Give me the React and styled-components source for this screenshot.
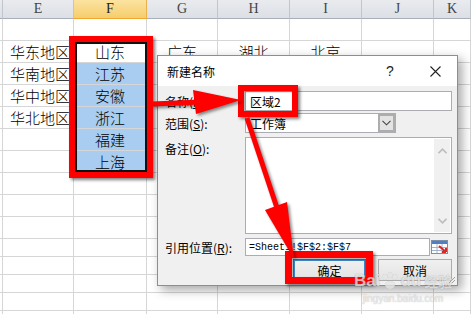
import styled, { createGlobalStyle } from "styled-components";

const GlobalStyle = createGlobalStyle`
  html, body { margin: 0; padding: 0; background: #fff; }
  body {
    font-family: "Noto Sans CJK SC", "Liberation Sans", sans-serif;
    overflow: hidden;
  }
`;

const COLS = ["", "E", "F", "G", "H", "I", "J", "K"];
const TEMPLATE = "3px 71px 73px 71px 72px 72px 72px 1fr";

const DATA = {
  1: { E: "华东地区", F: "山东", G: "广东", H: "湖北", I: "北京" },
  2: { E: "华南地区", F: "江苏" },
  3: { E: "华中地区", F: "安徽" },
  4: { E: "华北地区", F: "浙江" },
  5: { F: "福建" },
  6: { F: "上海" },
};

const ROWS = Array.from({ length: 15 }, (_, i) => ({
  h: i < 10 ? 22 : 18,
  ...(DATA[i] || {}),
}));

export default function App() {
  return (
    <>
      <GlobalStyle />
      <Frame>
        <Sheet>
          <HeadRow>
            {COLS.map((c, i) => (
              <HeadCell key={i} $sel={c === "F"}>{c}</HeadCell>
            ))}
          </HeadRow>
          {ROWS.map((r, i) => (
            <Row key={i} $h={r.h}>
              <Cell />
              <Cell $left>{r.E}</Cell>
              <Cell $fill={i >= 2 && i <= 6 ? "#a9cdf0" : "#fff"}>{r.F}</Cell>
              <Cell>{r.G}</Cell>
              <Cell>{r.H}</Cell>
              <Cell>{r.I}</Cell>
              <Cell />
              <Cell />
            </Row>
          ))}
        </Sheet>

        <Dialog>
          <TitleBar>
            <span>新建名称</span>
            <Controls>
              <Ctrl>?</Ctrl>
              <Ctrl>
                <svg width="11" height="11" viewBox="0 0 11 11">
                  <path d="M0.5 0.5 L10.5 10.5 M10.5 0.5 L0.5 10.5" stroke="#222" strokeWidth="1.1" />
                </svg>
              </Ctrl>
            </Controls>
          </TitleBar>

          <Body>
            <Field>
              <Label>名称(<u>N</u>):</Label>
              <Input>区域2</Input>
            </Field>

            <Field $gap={2}>
              <Label>范围(<u>S</u>):</Label>
              <Select>
                <span>工作簿</span>
                <DropBtn>
                  <svg width="9" height="6" viewBox="0 0 9 6">
                    <path d="M0.5 0.8 L4.5 4.8 L8.5 0.8" fill="none" stroke="#444" strokeWidth="1.1" />
                  </svg>
                </DropBtn>
              </Select>
            </Field>

            <Field $gap={4} $top>
              <Label $pt={3}>备注(<u>O</u>):</Label>
              <TextArea>
                <ScrollBar>
                  <svg width="9" height="6" viewBox="0 0 9 6">
                    <path d="M0.5 5.2 L4.5 1.2 L8.5 5.2" fill="none" stroke="#bdbdbd" strokeWidth="1.6" />
                  </svg>
                  <svg width="9" height="6" viewBox="0 0 9 6">
                    <path d="M0.5 0.8 L4.5 4.8 L8.5 0.8" fill="none" stroke="#bdbdbd" strokeWidth="1.6" />
                  </svg>
                </ScrollBar>
              </TextArea>
            </Field>

            <Field $gap={4}>
              <Label>引用位置(<u>R</u>):</Label>
              <RefLine>
                <RefInput>=Sheet1!$F$2:$F$7</RefInput>
                <svg width="18" height="16" viewBox="0 0 18 16">
                  <rect x="0.5" y="1.5" width="16" height="13" fill="#fff" stroke="#7d8ea8" />
                  <rect x="1" y="2" width="15" height="3" fill="#4f7fc4" />
                  <path d="M1 8.5 H16 M1 11.5 H16 M6 5 V14 M11 5 V14" stroke="#9fb3cf" strokeWidth="1" />
                  <path d="M8 7 L15 13 M15 13 L15 9 M15 13 L11 13" stroke="#d8262a" strokeWidth="2" fill="none" />
                </svg>
              </RefLine>
            </Field>

            <Buttons>
              <Button $focus>确定</Button>
              <Button>取消</Button>
            </Buttons>
          </Body>

          <Grip>
            <svg width="8" height="8" viewBox="0 0 8 8">
              <path d="M7 1 L1 7 M7 4 L4 7" stroke="#a0a0a0" strokeWidth="1" />
            </svg>
          </Grip>
        </Dialog>

        <RedBox $l={69} $t={36} $w={84} $h={142} $b={6}>
          <Inner />
        </RedBox>
        <RedBox $l={238} $t={85} $w={60} $h={32} $b={6} />
        <RedBox $l={285} $t={251} $w={88} $h={33} $b={7} />

        <Arrows width="471" height="314" viewBox="0 0 471 314">
          <path d="M152 104 L200 102" stroke="#ff0000" strokeWidth="5" />
          <polygon points="241,100 193,90 196,114" fill="#ff0000" />
          <path d="M247 118 L277 208" stroke="#ff0000" strokeWidth="5" />
          <polygon points="294,259 287,202 265,210" fill="#ff0000" />
        </Arrows>

        <Watermark>
          <Brand>
            Bai
            <svg width="20" height="18" viewBox="0 0 20 18">
              <ellipse cx="5" cy="5" rx="2.3" ry="3" fill="currentColor" />
              <ellipse cx="10" cy="3" rx="2.3" ry="3" fill="currentColor" />
              <ellipse cx="15" cy="5" rx="2.3" ry="3" fill="currentColor" />
              <ellipse cx="10" cy="13" rx="5" ry="4" fill="currentColor" />
            </svg>
            du<Small>经验</Small>
          </Brand>
          <Url>jingyan.baidu.com</Url>
        </Watermark>
      </Frame>
    </>
  );
}

const Frame = styled.div`
  position: relative;
  width: 471px;
  height: 314px;
  overflow: hidden;
  background: #fff;
`;

const Sheet = styled.div`
  display: flex;
  flex-direction: column;
`;

const HeadRow = styled.div`
  display: grid;
  grid-template-columns: ${TEMPLATE};
  height: 19px;
`;

const HeadCell = styled.div`
  box-sizing: border-box;
  display: flex;
  align-items: center;
  justify-content: center;
  font-family: "Liberation Serif", serif;
  font-size: 14px;
  color: ${(p) => (p.$sel ? "#222" : "#444")};
  background: ${(p) =>
    p.$sel
      ? "linear-gradient(#fbe3a0, #f6cd6c)"
      : "linear-gradient(#e9ebef, #dcdfe4)"};
  border-right: 1px solid ${(p) => (p.$sel ? "#e8b04f" : "#c1c6cd")};
  border-bottom: 1px solid ${(p) => (p.$sel ? "#f0a530" : "#a9afb8")};
`;

const Row = styled.div`
  display: grid;
  grid-template-columns: ${TEMPLATE};
  height: ${(p) => p.$h}px;
`;

const Cell = styled.div`
  box-sizing: border-box;
  display: flex;
  align-items: center;
  justify-content: ${(p) => (p.$left ? "flex-start" : "center")};
  padding-left: ${(p) => (p.$left ? "7px" : "0")};
  background: ${(p) => p.$fill || "#fff"};
  border-right: 1px solid #d6d6d6;
  border-bottom: 1px solid #d6d6d6;
  font-size: 15px;
  font-weight: 300;
  color: #000;
  white-space: nowrap;
  overflow: visible;
`;

const Dialog = styled.div`
  position: absolute;
  left: 157px;
  top: 55px;
  width: 301px;
  height: 231px;
  box-sizing: border-box;
  border: 1px solid #33b3c2;
  background: #f0f0f0;
  box-shadow: 4px 4px 10px rgba(0, 0, 0, 0.35);
  display: flex;
  flex-direction: column;
`;

const TitleBar = styled.div`
  height: 30px;
  background: #fff;
  display: flex;
  align-items: center;
  justify-content: space-between;
  padding-left: 9px;
  padding-right: 7px;
  font-size: 12px;
  color: #000;
`;

const Controls = styled.div`
  display: flex;
  gap: 15px;
`;

const Ctrl = styled.div`
  width: 30px;
  height: 20px;
  display: flex;
  align-items: center;
  justify-content: center;
  font-family: "Liberation Sans", sans-serif;
  font-size: 14px;
  color: #222;
`;

const Body = styled.div`
  flex: 1;
  display: flex;
  flex-direction: column;
  padding: 5px 5px 0 7px;
`;

const Field = styled.div`
  display: grid;
  grid-template-columns: 80px 1fr;
  align-items: ${(p) => (p.$top ? "start" : "center")};
  margin-top: ${(p) => p.$gap || 0}px;
`;

const Label = styled.div`
  font-size: 12px;
  color: #000;
  padding-top: ${(p) => p.$pt || 0}px;
  white-space: nowrap;

  u {
    text-underline-offset: 1px;
  }
`;

const Input = styled.div`
  box-sizing: border-box;
  height: 20px;
  background: #fff;
  border: 1px solid #abadb3;
  display: flex;
  align-items: center;
  padding-left: 4px;
  font-size: 12px;
`;

const Select = styled(Input)`
  width: 151px;
  justify-content: space-between;
  padding-right: 0;
`;

const DropBtn = styled.div`
  box-sizing: border-box;
  width: 17px;
  height: 18px;
  background: #e3e3e3;
  border: 2px solid #adadad;
  display: flex;
  align-items: center;
  justify-content: center;
`;

const TextArea = styled.div`
  box-sizing: border-box;
  height: 97px;
  background: #fff;
  border: 1px solid #abadb3;
  display: flex;
  justify-content: flex-end;
  padding: 1px;
`;

const ScrollBar = styled.div`
  width: 16px;
  background: #f0f0f0;
  display: flex;
  flex-direction: column;
  justify-content: space-between;
  align-items: center;
  padding: 9px 0 8px;
`;

const RefLine = styled.div`
  display: flex;
  align-items: center;
  gap: 1px;
  padding-right: 3px;
`;

const RefInput = styled(Input)`
  flex: 1;
  height: 18px;
  font-family: "Liberation Mono", monospace;
  font-size: 10px;
  padding-left: 3px;
`;

const Buttons = styled.div`
  display: flex;
  justify-content: flex-end;
  gap: 12px;
  margin-top: 3px;
`;

const Button = styled.div`
  box-sizing: border-box;
  width: ${(p) => (p.$focus ? 73 : 74)}px;
  height: 22px;
  display: flex;
  align-items: center;
  justify-content: center;
  font-size: 12px;
  color: #000;
  background: linear-gradient(#f0f0f0, #e3e3e3);
  border: 1px solid ${(p) => (p.$focus ? "#2f6ea6" : "#acacac")};
  box-shadow: ${(p) => (p.$focus ? "inset 0 0 0 1px #3c86c4" : "none")};
`;

const Grip = styled.div`
  position: absolute;
  right: 1px;
  bottom: 1px;
  line-height: 0;
`;

const RedBox = styled.div`
  position: absolute;
  left: ${(p) => p.$l}px;
  top: ${(p) => p.$t}px;
  width: ${(p) => p.$w}px;
  height: ${(p) => p.$h}px;
  box-sizing: border-box;
  border: ${(p) => p.$b}px solid #ff0000;
  box-shadow: 2px 2px 3px rgba(0, 0, 0, 0.5), inset 1px 1px 2px rgba(0, 0, 0, 0.35);
`;

const Inner = styled.div`
  width: 100%;
  height: 100%;
  box-sizing: border-box;
  border: 2px solid #111;
`;

const Arrows = styled.svg`
  position: absolute;
  left: 0;
  top: 0;
  pointer-events: none;
  filter: drop-shadow(2px 2px 1.5px rgba(0, 0, 0, 0.45));
`;

const Watermark = styled.div`
  position: absolute;
  left: 354px;
  top: 272px;
  display: flex;
  flex-direction: column;
  align-items: center;
  color: rgba(255, 255, 255, 0.7);
  text-shadow: 0 0 1px rgba(0, 0, 0, 0.35);
  pointer-events: none;
`;

const Brand = styled.div`
  display: flex;
  align-items: center;
  font-family: "Liberation Sans", sans-serif;
  font-weight: bold;
  font-size: 17px;
  line-height: 16px;

  svg {
    filter: drop-shadow(0 0 0.6px rgba(0, 0, 0, 0.4));
  }
`;

const Small = styled.span`
  font-family: "Noto Sans CJK SC", sans-serif;
  font-size: 14px;
  margin-left: 3px;
`;

const Url = styled.div`
  font-family: "Liberation Sans", sans-serif;
  font-size: 10px;
  margin-top: 3px;
`;
